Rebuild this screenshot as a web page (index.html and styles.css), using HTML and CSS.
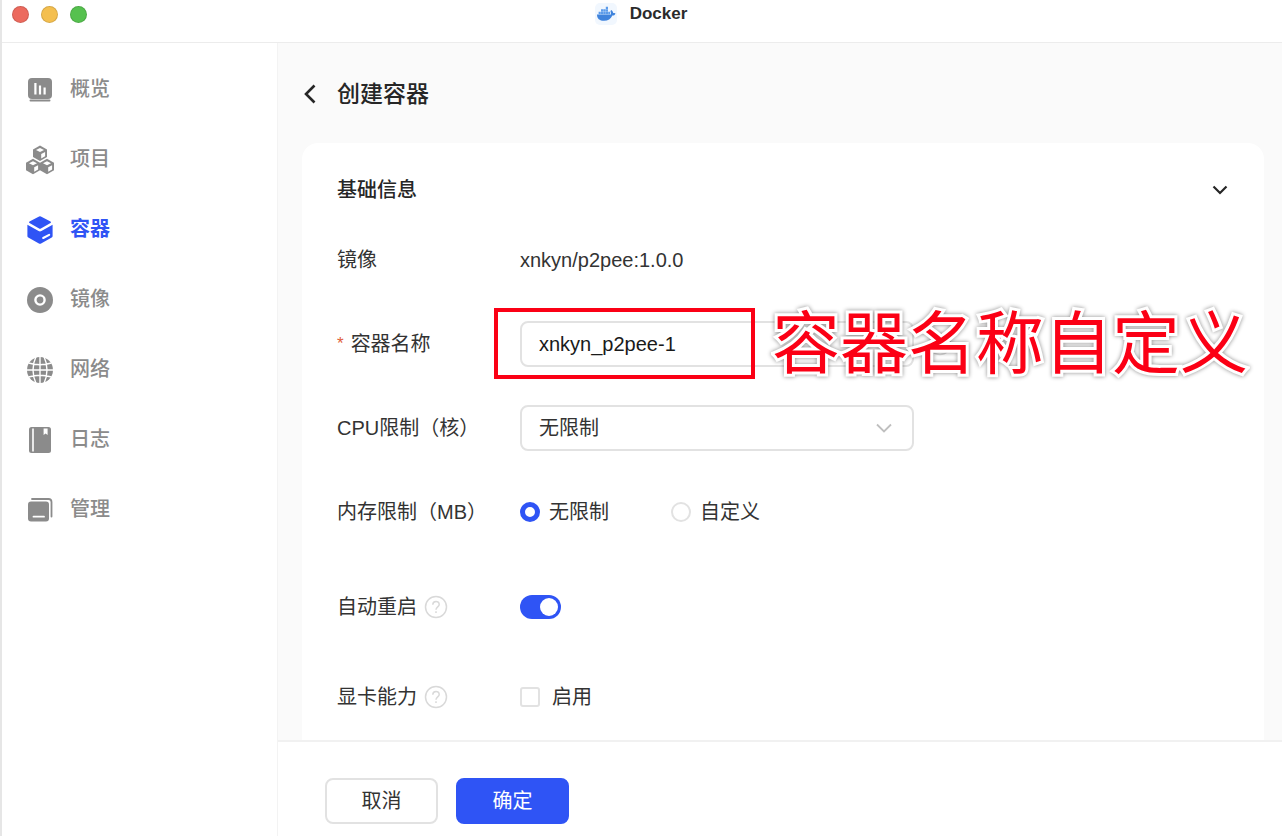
FILE: index.html
```html
<!DOCTYPE html>
<html lang="zh-CN">
<head>
<meta charset="utf-8">
<meta name="viewport" content="width=device-width, initial-scale=1">
<title>Docker</title>
<link rel="stylesheet" href="styles.css">
</head>
<body>
<div class="window">
  <header class="titlebar">
    <div class="lights">
      <button class="light light-close" type="button" aria-label="关闭"></button>
      <button class="light light-min" type="button" aria-label="最小化"></button>
      <button class="light light-max" type="button" aria-label="最大化"></button>
    </div>
    <div class="app">
      <svg class="app-icon" viewBox="0 0 22 22" aria-hidden="true">
        <rect width="22" height="22" rx="5" fill="#f1f7fe"/>
        <path d="M2 11.500h14c.2-1.300 0-2.600-.6-3.600l1-1c1.100.8 1.700 1.900 1.800 3 1 0 1.700.1 2.300.5-.6 1.500-1.700 2.100-3.200 2.200-1.400 3.500-4.300 5.200-8.200 5.200C4.400 17.800 2 15.500 2 11.500z" fill="#3f83dc"/>
        <path d="M3.600 8.700h2.200v2.500H3.600zM6 8.700h2.200v2.500H6zM8.400 8.700h2.200v2.500H8.400zM10.800 8.700H13v2.500h-2.200zM13.200 8.700h2v2.500h-2zM6 6.200h2.200v2.300H6zM8.400 6.200h2.200v2.300H8.400zM10.800 6.200H13v2.300h-2.200zM10.800 3.700H13V6h-2.200z" fill="#5b9bea"/>
      </svg>
      <span>Docker</span>
    </div>
  </header>
  <div class="body">
    <nav class="sidebar">
      <a class="nav-item" href="#overview">
        <svg class="nav-icon" viewBox="0 0 28 28" aria-hidden="true">
          <rect x="2" y="2" width="24" height="21" rx="4" fill="currentColor"/>
          <path d="M4.500 24.600h19" stroke="currentColor" stroke-width="2" stroke-linecap="round"/>
          <path d="M9.400 7v11.500M14 9.500v9M18.600 11.500v7" stroke="#fff" stroke-width="2.200"/>
        </svg><span>概览</span></a>
      <a class="nav-item" href="#project">
        <svg class="nav-icon" viewBox="0 0 28 28" aria-hidden="true">
          <g id="cube">
            <path d="M14 -.5l7 3.900v7.600l-7 3.900L7 11V3.400z" fill="currentColor"/>
            <path d="M14 1.900l4 2-4 2.100-4-2.100z M15.200 8l3.900-2.100v4.300l-3.900 2.200z" fill="#fff"/>
          </g>
          <use href="#cube" x="-7" y="13.300"/>
          <use href="#cube" x="7" y="13.300"/>
        </svg><span>项目</span></a>
      <a class="nav-item active" href="#container" aria-current="page">
        <svg class="nav-icon" viewBox="0 0 28 28" aria-hidden="true">
          <path d="M13.100.4q.9-.5 1.800 0l9.600 5.100q1.100.7 0 1.400l-9.600 5.500q-.9.5-1.800 0L3.500 6.900q-1.100-.7 0-1.400z" fill="currentColor"/>
          <path d="M1.400 8.800l11.200 6.300q1.400.7 2.800 0l11.200-6.300v11.100q0 1-.9 1.500l-10.600 6q-1.100.6-2.200 0l-10.600-6q-.9-.5-.9-1.500z" fill="currentColor"/>
          <path d="M17.200 22l6-3.200" stroke="#fff" stroke-width="2" stroke-linecap="round"/>
        </svg><span>容器</span></a>
      <a class="nav-item" href="#image">
        <svg class="nav-icon" viewBox="0 0 28 28" aria-hidden="true">
          <circle cx="14" cy="14" r="13" fill="currentColor"/>
          <circle cx="14" cy="14" r="4.600" fill="none" stroke="#fff" stroke-width="2.400"/>
        </svg><span>镜像</span></a>
      <a class="nav-item" href="#network">
        <svg class="nav-icon" viewBox="0 0 28 28" aria-hidden="true">
          <circle cx="14" cy="14" r="13" fill="currentColor"/>
          <path d="M14 0v28M0 14h28M2.500 7q11.500 3.600 23 0M2.500 21q11.500-3.600 23 0M10.200 0q-6.400 14 0 28M17.800 0q6.400 14 0 28" fill="none" stroke="#fff" stroke-width="1.400"/>
        </svg><span>网络</span></a>
      <a class="nav-item" href="#log">
        <svg class="nav-icon" viewBox="0 0 28 28" aria-hidden="true">
          <rect x="3" y="1" width="22" height="26" rx="2.500" fill="currentColor"/>
          <path d="M7 2.500v23" stroke="#fff" stroke-width="1.600"/>
          <path d="M17.600 2.500h4v6.400l-2-1.500-2 1.500z" fill="#fff"/>
        </svg><span>日志</span></a>
      <a class="nav-item" href="#manage">
        <svg class="nav-icon" viewBox="0 0 28 28" aria-hidden="true">
          <rect x="2" y="5.500" width="21" height="20" rx="3" fill="currentColor"/>
          <path d="M6 3h16.500q3 0 3 3v14.500" fill="none" stroke="currentColor" stroke-width="1.800" stroke-linecap="round"/>
          <path d="M7.500 20.700h10.500" stroke="#fff" stroke-width="1.800" stroke-linecap="round"/>
        </svg><span>管理</span></a>
    </nav>
    <main class="main">
      <div class="page">
        <div class="page-head">
          <button class="icon-button" type="button" aria-label="返回">
            <svg class="back-icon" viewBox="0 0 20 24" aria-hidden="true"><path d="M12.500 3.500L4 12l8.500 8.500" fill="none" stroke="currentColor" stroke-width="2.600"/></svg>
          </button>
          <h1 class="page-title">创建容器</h1>
        </div>
        <form class="card" id="create">
          <div class="section-head">
            <h2 class="section-title">基础信息</h2>
            <button class="icon-button" type="button" aria-label="收起">
              <svg class="chevron" viewBox="0 0 20 20" aria-hidden="true"><path d="M3.500 6.500L10 13l6.500-6.500" fill="none" stroke="currentColor" stroke-width="2.200"/></svg>
            </button>
          </div>
          <div class="row">
            <span class="label">镜像</span>
            <span>xnkyn/p2pee:1.0.0</span>
          </div>
          <div class="row">
            <label class="label" for="name"><span class="required">*</span>容器名称</label>
            <div class="control">
              <input class="field" id="name" type="text" value="xnkyn_p2pee-1">
              <svg class="help" viewBox="0 0 24 24" aria-hidden="true"><use href="#help-shape"/></svg>
              <div class="marker"></div>
              <div class="callout">容器名称自定义</div>
            </div>
          </div>
          <div class="row">
            <label class="label" for="cpu">CPU限制（核）</label>
            <div class="control">
              <select class="field" id="cpu"><option>无限制</option></select>
              <svg class="select-arrow" viewBox="0 0 20 20" aria-hidden="true"><path d="M3 6.500l7 7 7-7" fill="none" stroke="currentColor" stroke-width="1.800"/></svg>
            </div>
          </div>
          <div class="row" role="radiogroup" aria-labelledby="mem-label">
            <span class="label" id="mem-label">内存限制（MB）</span>
            <div class="radios">
              <label class="choice"><input class="radio" type="radio" name="memory" checked>无限制</label>
              <label class="choice"><input class="radio" type="radio" name="memory">自定义</label>
            </div>
          </div>
          <div class="row row-restart">
            <label class="label" for="restart">自动重启
              <svg class="help" viewBox="0 0 24 24" aria-hidden="true">
                <g id="help-shape" fill="none" stroke="currentColor" stroke-width="1.500">
                  <circle cx="12" cy="12" r="10.500"/>
                  <path d="M8.800 9.800c0-4.400 6.400-4.400 6.400-.4 0 2.400-3.200 2.500-3.200 5.300M12 16.200v1.700"/>
                </g>
              </svg>
            </label>
            <input class="switch" id="restart" type="checkbox" role="switch" checked>
          </div>
          <div class="row row-gpu">
            <span class="label">显卡能力
              <svg class="help" viewBox="0 0 24 24" aria-hidden="true"><use href="#help-shape"/></svg>
            </span>
            <label class="choice choice-check"><input class="check" type="checkbox">启用</label>
          </div>
        </form>
      </div>
      <footer class="actions">
        <button class="button" type="button">取消</button>
        <button class="button primary" type="submit" form="create">确定</button>
      </footer>
    </main>
  </div>
</div>
</body>
</html>
```
FILE: styles.css
```css
* {
  box-sizing: border-box;
}

body {
  margin: 0;
  color: #333;
  background: #fff;
  font: 20px/30px "Liberation Sans", "Noto Sans CJK SC", sans-serif;
}

button,
input,
select {
  margin: 0;
  color: inherit;
  font: inherit;
}

h1,
h2 {
  margin: 0;
}

.window {
  display: flex;
  flex-direction: column;
  height: 100vh;
  border-left: 2px solid #e6e6e6;
}

.titlebar {
  display: grid;
  flex: none;
  grid-template-columns: 1fr auto 1fr;
  align-items: center;
  padding: 0 12px 14px 10px;
  border-bottom: 1px solid #ececec;
}

.lights {
  display: flex;
  gap: 12px;
}

.light {
  width: 17px;
  height: 17px;
  padding: 0;
  border: 1px solid rgb(0 0 0 / 12%);
  border-radius: 50%;
}

.light-close {
  background: #ec6a5e;
}

.light-min {
  background: #f4bf4f;
}

.light-max {
  background: #56c14f;
}

.app {
  display: flex;
  align-items: center;
  gap: 13px;
  color: #2b2b2b;
  font-size: 17px;
  font-weight: 700;
  line-height: 28px;
}

.app-icon {
  width: 22px;
  height: 22px;
}

.body {
  display: flex;
  flex: 1;
  min-height: 0;
}

.sidebar {
  flex: none;
  width: 276px;
  padding-top: 12px;
  border-right: 1px solid #f3f3f3;
}

.nav-item {
  display: flex;
  align-items: center;
  gap: 16px;
  height: 70px;
  padding-left: 24px;
  color: #8b8b8b;
  font-weight: 500;
  text-decoration: none;
}

.nav-item span {
  padding-bottom: 2px;
}

.nav-item.active {
  color: #2f54f5;
  font-weight: 700;
}

.nav-icon {
  width: 28px;
  height: 28px;
  overflow: visible;
}

.main {
  display: flex;
  flex: 1;
  flex-direction: column;
  min-width: 0;
}

.page {
  display: flex;
  flex: 1;
  flex-direction: column;
  min-height: 0;
  overflow: hidden;
  padding: 0 18px 0 24px;
  background: #fafafa;
}

.page-head {
  display: flex;
  flex: none;
  align-items: center;
  gap: 15px;
  height: 100px;
  padding-top: 2px;
  color: #262626;
}

.page-title {
  font-size: 23px;
  font-weight: 500;
}

.icon-button {
  display: flex;
  padding: 0;
  border: 0;
  background: none;
}

.back-icon {
  width: 20px;
  height: 24px;
}

.chevron {
  width: 20px;
  height: 20px;
}

.card {
  flex: 1 0 auto;
  padding: 23px 34px 0 35px;
  border-radius: 16px 16px 0 0;
  background: #fff;
}

.section-head {
  display: flex;
  align-items: center;
  justify-content: space-between;
  height: 48px;
  margin-bottom: 23px;
  color: #262626;
}

.section-title {
  font-size: 20px;
  font-weight: 500;
}

.row {
  display: flex;
  align-items: center;
  height: 46px;
  margin-bottom: 38px;
}

.row-restart {
  margin-top: 49px;
  margin-bottom: 44px;
}

.row-gpu {
  margin-bottom: 0;
}

.label {
  display: flex;
  flex: none;
  align-items: center;
  gap: 7px;
  width: 183px;
  white-space: nowrap;
}

.required {
  color: #e0603c;
  font-size: 17px;
}

.help {
  flex: none;
  width: 24px;
  height: 24px;
  color: #d9d9d9;
}

.control {
  display: flex;
  position: relative;
  align-items: center;
  gap: 14px;
}

.field {
  width: 394px;
  height: 46px;
  padding: 0 17px;
  border: 2px solid #e2e2e2;
  border-radius: 8px;
  background: #fff;
  appearance: none;
}

input.field {
  color: #1a1a1a;
}

.select-arrow {
  position: absolute;
  right: 20px;
  width: 20px;
  height: 20px;
  color: #bfbfbf;
  pointer-events: none;
}

.marker {
  position: absolute;
  top: -13px;
  left: -26px;
  width: 261px;
  height: 71px;
  border: 4px solid #fb0015;
  pointer-events: none;
}

.callout {
  position: absolute;
  top: -17px;
  left: 252px;
  color: #fb0015;
  font-family: "Noto Sans CJK SC", sans-serif;
  font-size: 68px;
  line-height: 70px;
  white-space: nowrap;
  pointer-events: none;
  paint-order: stroke fill;
  -webkit-text-stroke: 6px #fff;
  filter: drop-shadow(0 0 2px rgb(0 0 0 / 45%));
}

.radios {
  display: flex;
  gap: 62px;
}

.choice {
  display: flex;
  align-items: center;
  gap: 9px;
}

.choice-check {
  gap: 12px;
}

.radio {
  width: 20px;
  height: 20px;
  border: 2px solid #e2e2e2;
  border-radius: 50%;
  background: #fff;
  appearance: none;
}

.radio:checked {
  border: 5px solid #2f54f5;
}

.check {
  width: 20px;
  height: 20px;
  border: 2px solid #e2e2e2;
  border-radius: 3px;
  background: #fff;
  appearance: none;
}

.switch {
  display: flex;
  align-items: center;
  width: 41px;
  height: 24px;
  padding: 3px;
  border-radius: 12px;
  background: #bfbfbf;
  appearance: none;
}

.switch::before {
  width: 18px;
  height: 18px;
  border-radius: 50%;
  background: #fff;
  content: "";
}

.switch:checked {
  justify-content: flex-end;
  background: #2f54f5;
}

.actions {
  display: flex;
  flex: none;
  gap: 18px;
  padding: 36px 47px 12px;
  border-top: 2px solid #f1f1f1;
  background: #fff;
}

.button {
  width: 113px;
  height: 46px;
  border: 2px solid #e2e2e2;
  border-radius: 8px;
  background: #fff;
}

.button.primary {
  border-color: #2f54f5;
  color: #fff;
  background: #2f54f5;
}
```
